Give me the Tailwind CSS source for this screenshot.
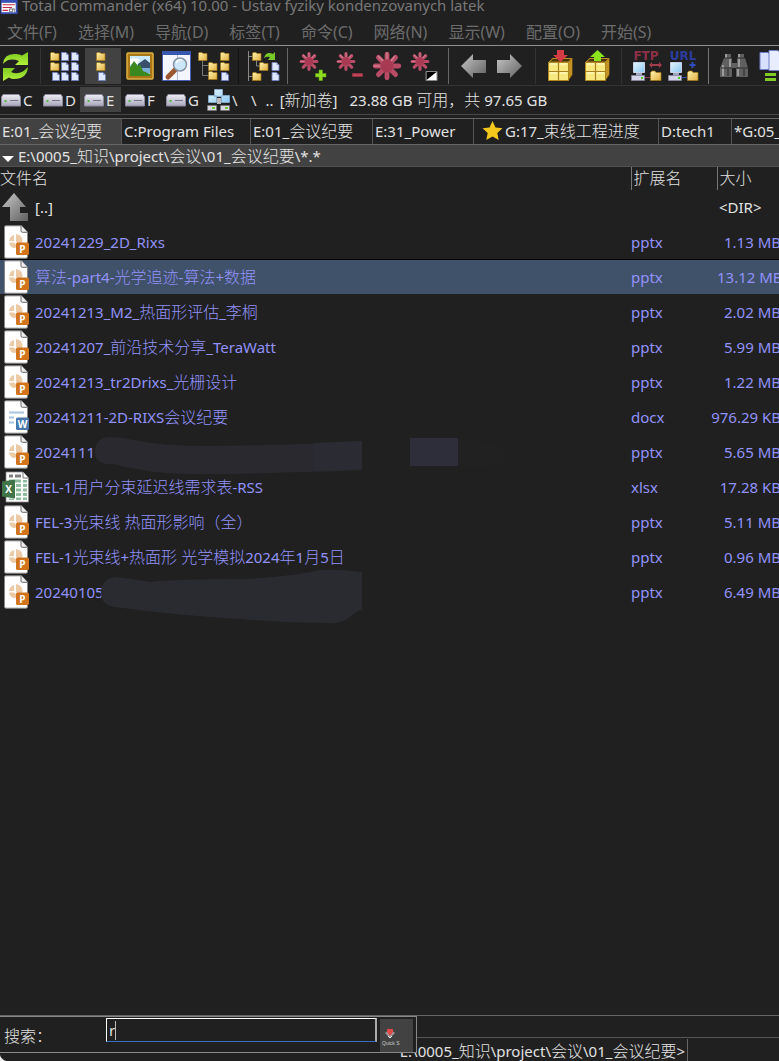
<!DOCTYPE html>
<html lang="zh-CN">
<head>
<meta charset="utf-8">
<title>Total Commander</title>
<script src="https://cdn.jsdelivr.net/npm/@tailwindcss/browser@4"></script>
</head>
<body class="bg-[#202020] text-[#e2e2e2] font-['Noto_Sans','Noto_Sans_CJK_SC',sans-serif] text-[15px] leading-5 whitespace-nowrap overflow-hidden [&_[lang=zh]]:text-base [&_[lang=zh]]:leading-5 [&_[lang=zh]]:font-light">

<svg class="absolute size-0" aria-hidden="true">
  <defs>
    <linearGradient id="gFold" x1="0" y1="0" x2="1" y2="1"><stop offset="0" stop-color="#fff3b0"/><stop offset="1" stop-color="#e0b040"/></linearGradient>
    <linearGradient id="gGreen" x1="0" y1="0" x2="0" y2="1"><stop offset="0" stop-color="#7ac820"/><stop offset="1" stop-color="#b4f03c"/></linearGradient>
    <linearGradient id="gGrey" x1="0" y1="0" x2="1" y2="1"><stop offset="0" stop-color="#c8c8c8"/><stop offset="1" stop-color="#606060"/></linearGradient>
    <linearGradient id="gDrive" x1="0" y1="0" x2="0" y2="1"><stop offset="0" stop-color="#eeeef4"/><stop offset="1" stop-color="#a8a6ba"/></linearGradient>
    <linearGradient id="gScreen" x1="0" y1="0" x2="1" y2="1"><stop offset="0" stop-color="#e4f6ff"/><stop offset="1" stop-color="#8cc8f0"/></linearGradient>
    <symbol id="folder" viewBox="0 0 10 9"><path d="M.5 1.500 1 .5h3l1 1h4v7H.5z" fill="url(#gFold)" stroke="#a87818" stroke-width=".7"/></symbol>
    <symbol id="file" viewBox="0 0 8 9"><path d="M.5.500H5L7.500 3v5.500h-7z" fill="#e0e8ff" stroke="#7080c0" stroke-width=".9"/><path d="M5 .5V3h2.500z" fill="#8898d8"/></symbol>
    <symbol id="aster" viewBox="0 0 28 28"><g stroke="#b84c66" stroke-width="4.500" stroke-linecap="round"><path d="M14 3v22M3 14h22M6 6l16 16M22 6 6 22"/></g><g stroke="#cf7b8c" stroke-width="1.500" stroke-linecap="round"><path d="M14 2v5M2 14h5M6 5l4 4M21 5l-3 4"/></g><circle cx="14" cy="14" r="6" fill="#a93a54"/></symbol>
    <symbol id="box" viewBox="0 0 25 24"><path d="m.5 5 4-4h20v17l-4 5.500H.5z" fill="#94680c"/><path d="m1 5 4-3.500h18.500L20.500 5z" fill="#473407" stroke="#d0a030" stroke-width=".8"/><path d="M.5 5.500h20v18H.5z" fill="#f8e880" stroke="#b08820"/><path d="M10.500 5.500v18M.5 14.500h20" stroke="#a98122" stroke-width="1.200"/><path d="M2 7h7M12 7h7M2 16h7M12 16h7" stroke="#fff8c0" stroke-width="1.500"/><path d="m21 5 3-3v15l-3 5z" fill="#c29224"/></symbol>
    <symbol id="pc" viewBox="0 0 32 20"><path d="M2.500.5h11v10h-11z" fill="url(#gScreen)" stroke="#c8d0e8"/><path d="M5 11h6v3H5z" fill="#a0a8c0"/><path d="M.5 13.500h13v5H.5z" fill="#d4d4e8" stroke="#8888a0" stroke-width=".8"/><path d="M10 15h2v2h-2z" fill="#54d020"/><path d="M14 15.500h6" stroke="currentColor"/><path d="M19.500 10.500 21 9h3l1 1.500h5v8H19.500z" fill="url(#gFold)" stroke="#a87818" stroke-width=".7"/></symbol>
    <symbol id="drive" viewBox="0 0 20 14"><path d="M2 1.500h16L19.500 4v9H.5V4z" fill="url(#gDrive)" stroke="#8c8a9c"/><path d="M9 7.500h8" stroke="#77758c"/><path d="M3.500 7h2v2h-2z" fill="#50b840"/></symbol>
    <symbol id="page" viewBox="0 0 28 34"><path d="M4 .8h15.500l6 6.500v24.400q0 1.500-1.500 1.500H4q-1.500 0-1.500-1.500V2Q2.500.8 4 .8z" fill="#fff" stroke="#858585"/><path d="M19 .8v5q0 1.500 1.500 1.500h5" fill="#eee" stroke="#666"/></symbol>
    <symbol id="pptx" viewBox="0 0 28 34"><use href="#page"/><path d="M12 10v6H7q1-5 5-6zM7 17.500h5l4.500 4Q12 24 9.500 22q-2.200-1.800-2.500-4.500zM14 9q7 1 6.500 8l-3 3-3.500-3z" fill="#eccaa6"/><rect x="14" y="17.500" width="13" height="12.500" rx="1.500" fill="#d2741c"/><text x="20.500" y="27.500" text-anchor="middle" font-family="Open Sans, sans-serif" font-size="10" font-weight="700" fill="#fff">P</text></symbol>
    <symbol id="docx" viewBox="0 0 28 34"><use href="#page"/><path d="M7 12.500h15M7 17.500h5M7 22.500h5" stroke="#a8c4e0" stroke-width="2"/><rect x="14" y="17.500" width="13" height="12.500" rx="1.500" fill="#4878ac"/><text x="20.500" y="27.500" text-anchor="middle" font-family="Open Sans, sans-serif" font-size="10" font-weight="700" fill="#fff">W</text></symbol>
    <symbol id="xlsx" viewBox="0 0 28 34"><path d="M4 2h17l5.500 6v24H4z" fill="#fff" stroke="#888" stroke-width=".8"/><path d="M21 2v6h5.500" fill="#fff" stroke="#777"/><path d="M7 4.500h4v3H7zM13 4.500h6v3h-6z" fill="#808080"/><path d="M7 9.500h4v2H7zM13 9.500h6v3h-6zM14 14h5v3h-5zM14 18.500h5v3h-5zM14 23h5v3h-5zM14 27.500h5v2.500h-5zM21 10h4v2.500h-4zM21 14h4v3h-4zM21 18.500h4v3h-4zM21 23h4v3h-4zM21 27.500h4v2.500h-4zM7 28.500h5V30H7z" fill="#90bda0"/><path d="M0 11.500 13 9.500v19L0 26.500z" fill="#3f7548"/><text x="6.500" y="23" text-anchor="middle" font-family="Open Sans, sans-serif" font-size="10" font-weight="700" fill="#fff">X</text></symbol>
  </defs>
</svg>

<div class="flex min-h-screen flex-col">
  <!-- Title bar -->
  <header class="flex h-[15px] items-end overflow-hidden">
    <svg class="h-[15px] w-[22px] shrink-0" viewBox="0 0 22 16"><path d="M0 0h18v15H0z" fill="#3850b4"/><path d="M1 3h15v10H1z" fill="#fff"/><path d="M2 5h13M2 8h10M2 11h6" stroke="#d02848" stroke-width="1.200"/><path d="M9 9h6v4H9z" fill="#777"/><path d="M10 10h2v2h-2zM13 10h1v3h-1z" fill="#fff"/></svg>
    <h1 class="text-[#787878] font-normal">Total Commander (x64) 10.00 - Ustav fyziky kondenzovanych latek</h1>
  </header>

  <nav class="flex h-[31px] items-center gap-[21px] border-b border-[#909090] pl-[7px] pt-[3px] text-base leading-5 text-[#6c6c6c] [&_[lang=zh]]:font-normal">
    <button><span lang="zh">文件</span>(F)</button><button><span lang="zh">选择</span>(M)</button><button><span lang="zh">导航</span>(D)</button><button><span lang="zh">标签</span>(T)</button><button><span lang="zh">命令</span>(C)</button><button><span lang="zh">网络</span>(N)</button><button><span lang="zh">显示</span>(W)</button><button><span lang="zh">配置</span>(O)</button><button><span lang="zh">开始</span>(S)</button>
  </nav>

  <!-- Button bar -->
  <div role="toolbar" class="flex h-10 shrink-0 items-center gap-px border-b border-[#333] overflow-hidden [&>button]:flex [&>button]:h-9 [&>button]:w-9 [&>button]:shrink-0 [&>button]:items-center [&>button]:justify-center [&_svg]:size-8 [&_svg]:shrink-0 [&>i]:h-9 [&>i]:w-px [&>i]:shrink-0 [&>i]:ml-[5px] [&>i]:mr-[6px]">
    <button aria-label="Refresh" class="-ml-0.5"><svg viewBox="0 0 32 32"><path d="M3 14Q4 3 16 4q4 0 6 1.500L28 2v13H15l4-4Q9 7 3 14z" fill="url(#gGreen)"/><path d="M28 17q-1 12-14 12-3 0-5-1.500L3 31V18h12l-4 4q9 4 17-5z" fill="url(#gGreen)"/></svg></button>
    <i class="bg-[#333]"></i>
    <button aria-label="Brief"><svg viewBox="0 0 32 32"><use href="#folder" x="0" y="2" width="10" height="9"/><use href="#folder" x="0" y="12" width="10" height="9"/><use href="#file" x="2" y="22" width="8" height="9"/><use href="#file" x="11" y="2" width="8" height="9"/><use href="#file" x="11" y="12" width="8" height="9"/><use href="#file" x="11" y="22" width="8" height="9"/><use href="#file" x="21" y="2" width="8" height="9"/><use href="#file" x="21" y="12" width="8" height="9"/><use href="#file" x="21" y="22" width="8" height="9"/></svg></button>
    <button aria-label="Full" aria-pressed="true" class="bg-[#424242]"><svg viewBox="0 0 32 32"><use href="#folder" x="9" y="2" width="10" height="9"/><use href="#folder" x="9" y="12" width="10" height="9"/><use href="#file" x="11" y="22" width="8" height="9"/></svg></button>
    <button aria-label="Thumbnails"><svg viewBox="0 0 32 32"><rect x="3" y="3" width="26" height="26" rx="1" fill="#a87818" stroke="#e0b040" stroke-width="1.500"/><path d="M6 6h20v20H6z" fill="#c8eafa"/><path d="M6 9q6-2 10 1l-3 4H6z" fill="#fff"/><path d="m14 14 7-5 5 4v6H13z" fill="#38506c"/><path d="M14 18h12v5H14z" fill="#78b0d8"/><path d="m6 17 4-6 4 5 2-2 3 7 7 3v2H6z" fill="#3c8820"/></svg></button>
    <button aria-label="Quick view"><svg viewBox="0 0 32 32"><path d="M1.500 1.500h28v29h-28z" fill="#f4f6ff" stroke="#4860b8"/><path d="M1 1h29v4H1z" fill="#3858b0"/><path d="M16.500 5v25" stroke="#b0b8d8"/><path d="m14 20-7 7" stroke="#9c5830" stroke-width="5" stroke-linecap="round"/><circle cx="19" cy="14.500" r="6.500" fill="#cde6f8" stroke="#8494a8" stroke-width="1.500"/><path d="M15 13q2-4 6-3" stroke="#fff" stroke-width="1.500" fill="none"/></svg></button>
    <button aria-label="Tree"><svg viewBox="0 0 32 32"><path d="M4.500 10v15.500H11M4.500 15.500H11" stroke="#777" fill="none"/><use href="#folder" x="0" y="2" width="10" height="9"/><use href="#folder" x="10" y="12" width="10" height="9"/><use href="#folder" x="10" y="21" width="10" height="9"/><use href="#folder" x="22" y="2" width="10" height="9"/><use href="#folder" x="22" y="12" width="10" height="9"/><use href="#file" x="23" y="22" width="8" height="9"/></svg></button>
    <i class="bg-[#111]"></i>
    <button aria-label="Branch view"><svg viewBox="0 0 32 32"><path d="M.5 1v30M1 6.500h4M1 26.500h4M8.500 10v6H12" stroke="#888" fill="none"/><use href="#folder" x="4" y="2" width="10" height="9"/><use href="#folder" x="11" y="12" width="10" height="9"/><use href="#folder" x="4" y="22" width="10" height="9"/><path d="M16 8q2-7 9-4l2-2v8h-7l2-3q-3-1-6 1z" fill="#78c828"/><use href="#file" x="23" y="12" width="9" height="9"/><use href="#file" x="23" y="22" width="9" height="9"/></svg></button>
    <i class="ml-[4px]! mr-[6px]! bg-[#666]"></i>
    <button aria-label="Select group"><svg viewBox="0 0 32 32"><use href="#aster" x="2" y="1" width="20" height="21"/><path d="M22 20h3.500v3.500H29V27h-3.500v3.500H22V27h-3.500v-3.500H22z" fill="#90dc20" stroke="#60a010" stroke-width=".6"/></svg></button>
    <button aria-label="Unselect group"><svg viewBox="0 0 32 32"><use href="#aster" x="2" y="1" width="20" height="21"/><path d="M18.500 23.500h10v3h-10z" fill="#c04458" stroke="#903040"/></svg></button>
    <button aria-label="Select all"><svg viewBox="0 0 32 32"><use href="#aster" x="1" y="1" width="30" height="30"/></svg></button>
    <button aria-label="Invert selection"><svg viewBox="0 0 32 32"><use href="#aster" x="2" y="1" width="20" height="21"/><path d="M18 21.500h11v9H18z" fill="#fff" stroke="#888"/><path d="M18.500 22h10l-10 8z" fill="#000"/></svg></button>
    <i class="mx-[5px]! bg-[#666]"></i>
    <button aria-label="Back"><svg viewBox="0 0 32 32"><path d="M4 16 16 4v6h13v13H16v5z" fill="url(#gGrey)"/></svg></button>
    <button aria-label="Forward"><svg viewBox="0 0 32 32"><path d="M28 16 16 4v6H3v13h13v5z" fill="url(#gGrey)"/></svg></button>
    <i class="mx-[6px]! bg-[#333]"></i>
    <button aria-label="Pack"><svg viewBox="0 0 32 32"><use href="#box" x="3" y="7" width="25" height="24"/><path d="M12 0h7v5h4l-7.500 7L8 5h4z" fill="#d43c44"/></svg></button>
    <button aria-label="Unpack"><svg viewBox="0 0 32 32"><use href="#box" x="3" y="7" width="25" height="24"/><path d="M12 11h7V7h4L15.500 0 8 7h4z" fill="#8ce420"/></svg></button>
    <i class="ml-[4px]! mr-[6px]! bg-[#333]"></i>
    <button aria-label="FTP connect" class="text-[#8c3850]"><svg viewBox="0 0 32 32"><text x="15" y="10" text-anchor="middle" font-family="DejaVu Sans, sans-serif" font-size="12" font-weight="700" fill="#8c3048">FTP</text><use href="#pc" x="0" y="12" width="32" height="20"/><path d="m18 15 3-3v2h7v-2l3 3-3 3v-2h-7v2z" fill="#a43c50"/></svg></button>
    <button aria-label="FTP new connection" class="text-[#3450a4]"><svg viewBox="0 0 32 32"><text x="15" y="10" text-anchor="middle" font-family="DejaVu Sans, sans-serif" font-size="12" font-weight="700" fill="#2c3c9c">URL</text><use href="#pc" x="0" y="12" width="32" height="20"/><path d="M24.500 12v6M21.500 15h6" stroke="#304cc0" stroke-width="2"/></svg></button>
    <i class="bg-[#777]"></i>
    <button aria-label="Search"><svg viewBox="0 0 32 32"><path d="M7 4h6v4h1v5h5V8h1V4h6v4h1l3 10v9H18v-9h-4v9H2v-9L6 8h1z" fill="#606060"/><path d="M8 4v4M21 4v4M5 15v11M20 19v7M12 9v8M21 9v8" stroke="#b0b0b0" stroke-width="1.500"/><path d="M6 8h8M19 8h8M3 18h11M18 18h12M10 19v7M26 19v7" stroke="#303030" stroke-width="1.200"/></svg></button>
    <button aria-label="Multi-rename"><svg viewBox="0 0 32 32"><path d="M5 2.500h8l5 5v12H5z" fill="#d8e0ff" stroke="#7080c8"/><path d="M14 .5h9l6 6v14H14z" fill="#e8eeff" stroke="#7080c8"/><path d="M10 23h11v3H10zM10 28h11v3H10z" fill="#80cc24"/></svg></button>
  </div>

  <!-- Drive bar -->
  <div class="flex h-7 shrink-0 items-center pb-px [&>button]:flex [&>button]:h-[25px] [&>button]:w-[41px] [&>button]:shrink-0 [&>button]:items-center [&>button]:gap-[2px] [&>button]:pl-1 [&_svg]:shrink-0">
    <button class="w-10! pl-px!"><svg class="h-[14px] w-5"><use href="#drive"/></svg>C</button>
    <button class="w-10! pl-[3px]!"><svg class="h-[14px] w-5"><use href="#drive"/></svg>D</button>
    <button aria-pressed="true" class="bg-[#424242]"><svg class="h-[14px] w-5"><use href="#drive"/></svg>E</button>
    <button><svg class="h-[14px] w-5"><use href="#drive"/></svg>F</button>
    <button><svg class="h-[14px] w-5"><use href="#drive"/></svg>G</button>
    <button><svg class="h-6 w-[23px]" viewBox="0 0 23 24"><path d="M10 10h4v6h-4z" fill="#bbb"/><path d="M7.500 1.500h8v7h-8zM1.500 7.500h8v7h-8zM14.500 7.500h8v7h-8z" fill="url(#gScreen)" stroke="#8ab4d8" stroke-width=".8"/><path d="M.5 17.500h9v5h-9zM13.500 17.500h9v5h-9z" fill="#d8d8e4" stroke="#777" stroke-width=".6"/><path d="M5 19h3v2H5zM18 19h3v2h-3z" fill="#78cc30"/></svg>\</button>
    <span class="pl-[7px]">\</span>
    <span class="pl-[9px]">..</span>
    <span class="pl-1.5">[<span lang="zh">新加卷</span>]</span>
    <span class="pl-3">23.88 GB <span lang="zh">可用，共</span> 97.65 GB</span>
  </div>
  <div class="h-1 shrink-0 border-t border-[#484848]"></div>

  <!-- Folder tabs -->
  <div role="tablist" class="flex h-[27px] shrink-0 overflow-hidden border-y border-[#666] [&>button]:flex [&>button]:shrink-0 [&>button]:items-center [&>button]:border-r [&>button]:border-[#555] [&>button]:pl-0.5 [&>button]:pb-0.5">
    <button role="tab" aria-selected="true" class="w-[122px] bg-[#424242]">E:01_<span lang="zh">会议纪要</span></button>
    <button role="tab" class="w-[129px]">C:Program Files</button>
    <button role="tab" class="w-[122px]">E:01_<span lang="zh">会议纪要</span></button>
    <button role="tab" class="w-[101px]">E:31_Power</button>
    <button role="tab" class="w-[185px] pl-2!"><svg class="mr-0.5 size-[21px]" viewBox="0 0 21 21"><path d="m10.500 1 3 6.500 7 .8-5.200 4.800 1.400 7-6.200-3.500-6.200 3.500 1.400-7L.5 8.300l7-.8z" fill="#f4c81c"/></svg>G:17_<span lang="zh">束线工程进度</span></button>
    <button role="tab" class="w-[73px]">D:tech1</button>
    <button role="tab" class="w-[80px]">*G:05_</button>
  </div>

  <!-- Current path -->
  <div class="flex h-[22px] shrink-0 items-center border-b border-[#505050] bg-[#424242]">
    <button aria-label="Directory history" class="pl-0.5 pt-1.5 pr-1"><svg class="h-1.5 w-3" viewBox="0 0 12 6"><path d="M0 0h12L6 6z" fill="#fff"/></svg></button>
    <span>E:\0005_<span lang="zh">知识</span>\project\<span lang="zh">会议</span>\01_<span lang="zh">会议纪要</span>\*.*</span>
  </div>

  <!-- File list -->
  <main class="relative flex-1 overflow-hidden">
    <table class="w-[calc(100%+4px)] table-fixed border-collapse text-[#9292fa] [&_td]:p-0 [&_th]:p-0 [&_tbody_td:first-child_div]:flex [&_tbody_td:first-child_div]:h-[34px] [&_tbody_td:first-child_div]:items-center [&_tbody_td:first-child_div]:gap-[5px] [&_tbody_td:first-child_div]:pl-0.5 [&_tbody_svg]:h-[34px] [&_tbody_svg]:w-7 [&_tbody_svg]:shrink-0 [&_tbody_tr]:h-[35px] [&_tbody_tr]:border-t [&_tbody_tr]:border-[#202020] [&_tbody_td:last-child]:text-right [&_tbody_td:last-child]:pr-0.5">
      <thead class="text-left text-[#e2e2e2] border-b border-[#282828]">
        <tr class="h-[22px]"><th class="font-normal"><span lang="zh">文件名</span></th><th class="w-[86px] border-l border-[#777] pl-0.5! font-normal"><span lang="zh">扩展名</span></th><th class="w-[66px] border-l border-[#777] pl-0.5! font-normal"><span lang="zh">大小</span></th></tr>
      </thead>
      <tbody>
        <tr class="text-[#e2e2e2]"><td><div><svg viewBox="0 0 28 34"><path d="M12 3 24 17h-6v6h8v8H8V17H0z" fill="url(#gGrey)"/></svg><p>[..]</p></div></td><td></td><td class="text-left! pl-0.5!">&lt;DIR&gt;</td></tr>
        <tr><td><div><svg><use href="#pptx"/></svg><p>20241229_2D_Rixs</p></div></td><td>pptx</td><td>1.13 MB</td></tr>
        <tr class="border-black! bg-[#40516a]"><td><div><svg><use href="#pptx"/></svg><p><span lang="zh">算法</span>-part4-<span lang="zh">光学追迹</span>-<span lang="zh">算法</span>+<span lang="zh">数据</span></p></div></td><td>pptx</td><td>13.12 MB</td></tr>
        <tr><td><div><svg><use href="#pptx"/></svg><p>20241213_M2_<span lang="zh">热面形评估</span>_<span lang="zh">李桐</span></p></div></td><td>pptx</td><td>2.02 MB</td></tr>
        <tr><td><div><svg><use href="#pptx"/></svg><p>20241207_<span lang="zh">前沿技术分享</span>_TeraWatt</p></div></td><td>pptx</td><td>5.99 MB</td></tr>
        <tr><td><div><svg><use href="#pptx"/></svg><p>20241213_tr2Drixs_<span lang="zh">光栅设计</span></p></div></td><td>pptx</td><td>1.22 MB</td></tr>
        <tr><td><div><svg><use href="#docx"/></svg><p>20241211-2D-RIXS<span lang="zh">会议纪要</span></p></div></td><td>docx</td><td><div class="flex justify-end">976.29 KB</div></td></tr>
        <tr><td><div><svg><use href="#pptx"/></svg><p>2024111</p></div></td><td>pptx</td><td>5.65 MB</td></tr>
        <tr><td><div><svg><use href="#xlsx"/></svg><p>FEL-1<span lang="zh">用户分束延迟线需求表</span>-RSS</p></div></td><td>xlsx</td><td>17.28 KB</td></tr>
        <tr><td><div><svg><use href="#pptx"/></svg><p>FEL-3<span lang="zh">光束线 热面形影响（全）</span></p></div></td><td>pptx</td><td>5.11 MB</td></tr>
        <tr><td><div><svg><use href="#pptx"/></svg><p>FEL-1<span lang="zh">光束线</span>+<span lang="zh">热面形 光学模拟</span>2024<span lang="zh">年</span>1<span lang="zh">月</span>5<span lang="zh">日</span></p></div></td><td>pptx</td><td>0.96 MB</td></tr>
        <tr><td><div><svg><use href="#pptx"/></svg><p>20240105</p></div></td><td>pptx</td><td>6.49 MB</td></tr>
      </tbody>
    </table>
    <!-- Redaction strokes over two file names -->
    <svg class="pointer-events-none absolute left-[95px] top-[269px] h-[190px] w-[420px]" viewBox="0 0 420 190" aria-hidden="true">
      <path d="M0 16Q0 2 14 1q12 0 25 3 30 6 70 6 70 0 158-5v29q-90 4-170 4-40 0-80-10Q0 29 0 16z" fill="#29292f"/>
      <path d="M219 7 267 5v28l-48 2z" fill="#2b2b34"/>
      <path d="M315 2h48v28h-48z" fill="#2e2e3a"/>
      <path d="M363 3q48 2 48 16-2 16-48 12z" fill="#212121"/>
      <path d="M6 157q0-14 14-16 18 2 36 5 20-3 90-3 50-2 78-9 22-1 43 2v38q-6 1-12 7-8 6-18 6-50 0-90-4-60-3-127-12-14-2-14-14z" fill="#2a2a31"/>
    </svg>
  </main>

  <!-- Command line with the quick-search panel over it -->
  <footer class="relative h-[46px] shrink-0 border-t border-[#666]">
    <div class="mt-[21px] flex h-6 items-center overflow-hidden border-t border-[#555]">
      <label for="cmd" class="w-[688px] shrink-0 border-r border-[#666] pr-0.5 pt-0.5 text-right">E:\0005_<span lang="zh">知识</span>\project\<span lang="zh">会议</span>\01_<span lang="zh">会议纪要</span>&gt;</label>
      <input id="cmd" class="min-w-0 flex-1 bg-transparent outline-none">
    </div>
    <form class="absolute left-0 top-0 flex h-[37px] w-[417px] border border-l-0 border-[#888] bg-[#202020]">
      <label for="find" class="w-[106px] pl-1 pt-[9px]"><span lang="zh">搜索：</span></label>
      <div class="mt-px flex h-6 w-[271px] items-center border border-r-2 border-white border-r-[#aaa] border-b-[#3a6cc0] pl-0.5">
        <input id="find" value="r" class="w-1.5 bg-transparent outline-none"><span class="h-[19px] w-px bg-[#bbb]"></span>
      </div>
      <button type="button" aria-label="Quick search options" class="ml-[3px] mt-0.5 h-[33px] w-[33px] bg-[#424242]"><svg class="h-[33px] w-[33px]" viewBox="0 0 33 33"><path d="m5 14 5 5 5-5-5-4z" fill="#999"/><path d="M7 10h6v3l-3 4-3-4z" fill="#e04848"/><path d="m8 17 2 2 2-2" stroke="#eee" fill="none"/><text x="2" y="26" font-family="Liberation Sans, sans-serif" font-size="5" fill="#ccc">Quick S</text></svg></button>
    </form>
    <svg class="absolute bottom-0 left-0 size-1.5" viewBox="0 0 6 6"><path d="M0 0q1 4 6 6H0z" fill="#eee"/></svg>
  </footer>
</div>
</body>
</html>
